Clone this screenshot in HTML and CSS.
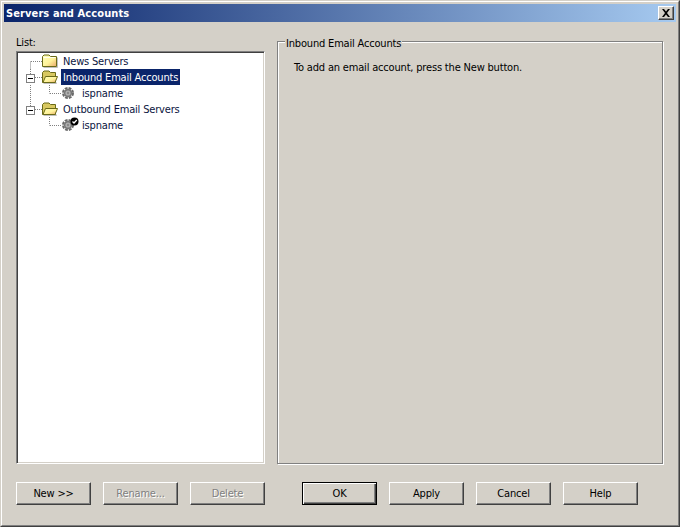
FILE: index.html
```html
<!DOCTYPE html>
<html lang="en">
<head>
<meta charset="utf-8">
<title>Servers and Accounts</title>
<link rel="stylesheet" href="styles.css">
</head>
<body>
<svg class="sprite" width="0" height="0" aria-hidden="true">
  <defs>
    <linearGradient id="folder-fill" x1="0" y1="0" x2="1" y2="1">
      <stop offset="0" stop-color="#ffffb8"/>
      <stop offset=".55" stop-color="#fff39a"/>
      <stop offset="1" stop-color="#e8a868"/>
    </linearGradient>
    <symbol id="folder-closed" viewBox="0 0 16 14">
      <path d="M.5 12.500V2.500L2 1H7L8.500 2.500H14.500V12.500Z" fill="url(#folder-fill)" stroke="#6a6a18"/>
      <path d="M1.500 3.500H13.500" stroke="#fffff0" fill="none"/>
      <path d="M15.500 3.500V13.500H1.500" stroke="#c0c0c0" fill="none"/>
    </symbol>
    <symbol id="folder-open" viewBox="0 0 16 14">
      <path d="M.5 12.500V2.500L2 1H7L8.500 2.500H13.500V12.500Z" fill="#d8c860" stroke="#6a6a18"/>
      <path d="M1 12.500L3.500 6.500H15.500L13 12.500Z" fill="url(#folder-fill)" stroke="#6a6a18"/>
      <path d="M14.500 12.500V13.500H1.500" stroke="#c0c0c0" fill="none"/>
    </symbol>
    <symbol id="gear" viewBox="0 0 12 12">
      <circle cx="6" cy="6" r="5" fill="none" stroke="#6a6a6a" stroke-width="2" stroke-dasharray="2.800 1.130"/>
      <circle cx="6" cy="6" r="4.200" fill="#777"/>
      <circle cx="6" cy="6" r="2.600" fill="#b0b0b0"/>
      <circle cx="6" cy="6" r="1.200" fill="#8a8a8a"/>
    </symbol>
  </defs>
</svg>

<div class="window">
  <div class="window-inner">
    <header class="titlebar">
      <h1 class="title">Servers and Accounts</h1>
      <button class="close" type="button" aria-label="Close">
        <svg width="10" height="8" viewBox="0 0 10 8"><path d="M1 0h2l2 2.500L7 0h2L6 4l3 4H7L5 5.500 3 8H1l3-4z" fill="#000"/></svg>
      </button>
    </header>

    <main class="content">
      <div class="panes">
        <section class="list-pane">
          <div class="list-label">List:</div>
          <div class="tree">
            <div class="row">
              <svg class="lines" width="44" height="16" viewBox="0 0 44 16">
                <path class="dots" d="M12.500 8.500V16M13 8.500H24"/>
                <use href="#folder-closed" x="24" y="1" width="16" height="14"/>
              </svg>
              <span class="label">News Servers</span>
            </div>
            <div class="row">
              <svg class="lines" width="44" height="16" viewBox="0 0 44 16">
                <path class="dots" d="M12.500 0V5M17 8.500H24"/>
                <rect class="box" x="8.500" y="5.500" width="8" height="8"/>
                <path class="minus" d="M10 9.500H15"/>
                <use href="#folder-open" x="24" y="1" width="16" height="14"/>
              </svg>
              <span class="label selected">Inbound Email Accounts</span>
            </div>
            <div class="row child">
              <svg class="lines" width="62" height="16" viewBox="0 0 62 16">
                <path class="dots" d="M12.500 0V16M31.500 0V8.500M32 8.500H44"/>
                <use href="#gear" x="44" y="2" width="12" height="12"/>
              </svg>
              <span class="label">ispname</span>
            </div>
            <div class="row">
              <svg class="lines" width="44" height="16" viewBox="0 0 44 16">
                <path class="dots" d="M12.500 0V5M17 8.500H24"/>
                <rect class="box" x="8.500" y="5.500" width="8" height="8"/>
                <path class="minus" d="M10 9.500H15"/>
                <use href="#folder-open" x="24" y="1" width="16" height="14"/>
              </svg>
              <span class="label">Outbound Email Servers</span>
            </div>
            <div class="row child">
              <svg class="lines" width="62" height="16" viewBox="0 0 62 16">
                <path class="dots" d="M31.500 0V8.500M32 8.500H44"/>
                <use href="#gear" x="44" y="2" width="12" height="12"/>
                <circle cx="56.500" cy="4.500" r="4" fill="#000"/>
                <path d="M54.500 4.500L56 6L58.800 3" fill="none" stroke="#fff" stroke-width="1.300"/>
              </svg>
              <span class="label">ispname</span>
            </div>
          </div>
        </section>

        <section class="group">
          <h2 class="legend">Inbound Email Accounts</h2>
          <p class="hint">To add an email account, press the New button.</p>
        </section>
      </div>

      <div class="buttons">
        <button class="btn" type="button">New &gt;&gt;</button>
        <button class="btn" type="button" disabled>Rename...</button>
        <button class="btn" type="button" disabled>Delete</button>
        <button class="btn default sep" type="button">OK</button>
        <button class="btn" type="button">Apply</button>
        <button class="btn" type="button">Cancel</button>
        <button class="btn" type="button">Help</button>
      </div>
    </main>
  </div>
</div>
</body>
</html>
```

FILE: styles.css
```css
* { box-sizing: border-box; }

html, body {
  margin: 0;
  padding: 0;
}

body {
  width: 680px;
  height: 527px;
  overflow: hidden;
  background: #d4d0c8;
  font-family: "DejaVu Sans Condensed", "Liberation Sans", Arial, sans-serif;
  font-size: 11px;
  letter-spacing: -0.18px;
  color: #000;
}

.sprite { position: absolute; }

.window {
  width: 680px;
  height: 527px;
  border: 1px solid;
  border-color: #d4d0c8 #404040 #404040 #d4d0c8;
}

.window-inner {
  height: 100%;
  display: flex;
  flex-direction: column;
  border: 1px solid;
  border-color: #fff #808080 #808080 #fff;
  padding: 2px;
}

.titlebar {
  height: 18px;
  flex: none;
  display: flex;
  align-items: center;
  justify-content: space-between;
  padding: 0 2px;
  background: linear-gradient(90deg, #0a246a, #a6caf0);
}

.title {
  margin: 0;
  font-size: 11px;
  font-weight: 700;
  letter-spacing: 0.1px;
  color: #fff;
}

.close {
  width: 16px;
  height: 14px;
  padding: 0;
  display: flex;
  align-items: center;
  justify-content: center;
  background: #d4d0c8;
  border: 1px solid;
  border-color: #fff #404040 #404040 #fff;
  box-shadow: inset -1px -1px 0 #808080;
}

.content {
  flex: 1;
  min-height: 0;
  display: flex;
  flex-direction: column;
  padding: 14px 13px 18px 12px;
}

.panes {
  flex: 1;
  min-height: 0;
  display: flex;
  gap: 12px;
}

.list-pane {
  width: 249px;
  flex: none;
  display: flex;
  flex-direction: column;
}

.list-label {
  height: 15px;
  line-height: 13px;
}

.tree {
  flex: 1;
  background: #fff;
  border: 1px solid;
  border-color: #808080 #fff #fff #808080;
  box-shadow: inset 1px 1px 0 #404040, inset -1px -1px 0 #d4d0c8;
  padding: 1px;
}

.row {
  height: 16px;
  display: flex;
  align-items: center;
}

.lines { flex: none; display: block; }

.dots {
  fill: none;
  stroke: #808080;
  stroke-dasharray: 1 1;
}

.box { fill: #fff; stroke: #808080; }
.minus { fill: none; stroke: #000; }

.label {
  height: 16px;
  line-height: 17px;
  padding: 0 2px;
  margin-left: -1px;
  white-space: nowrap;
  color: #0a1440;
}

.child .label { margin-left: 0; }

.label.selected {
  background: #0a246a;
  color: #fff;
}

.group {
  position: relative;
  flex: 1;
  margin-top: 5px;
  border: 1px solid #808080;
  box-shadow: inset 1px 1px 0 #fff, 1px 1px 0 #fff;
  padding: 19px 16px 0;
}

.legend {
  position: absolute;
  top: -5px;
  left: 7px;
  margin: 0;
  padding: 0 1px;
  background: #d4d0c8;
  font-size: 11px;
  font-weight: 400;
  line-height: 13px;
}

.hint {
  margin: 0;
  line-height: 14px;
}

.buttons {
  flex: none;
  display: flex;
  gap: 12px;
  margin-top: 18px;
}

.btn {
  width: 75px;
  height: 23px;
  padding: 0;
  background: #d4d0c8;
  color: #000;
  font: inherit;
  letter-spacing: inherit;
  border: 1px solid;
  border-color: #fff #404040 #404040 #fff;
  box-shadow: inset -1px -1px 0 #808080;
}

.btn:disabled {
  color: #808080;
  text-shadow: 1px 1px 0 #fff;
}

.btn.default {
  border-color: #000;
  box-shadow: inset 1px 1px 0 #fff, inset -1px -1px 0 #404040, inset -2px -2px 0 #808080;
}

.sep { margin-left: 25px; }
```
